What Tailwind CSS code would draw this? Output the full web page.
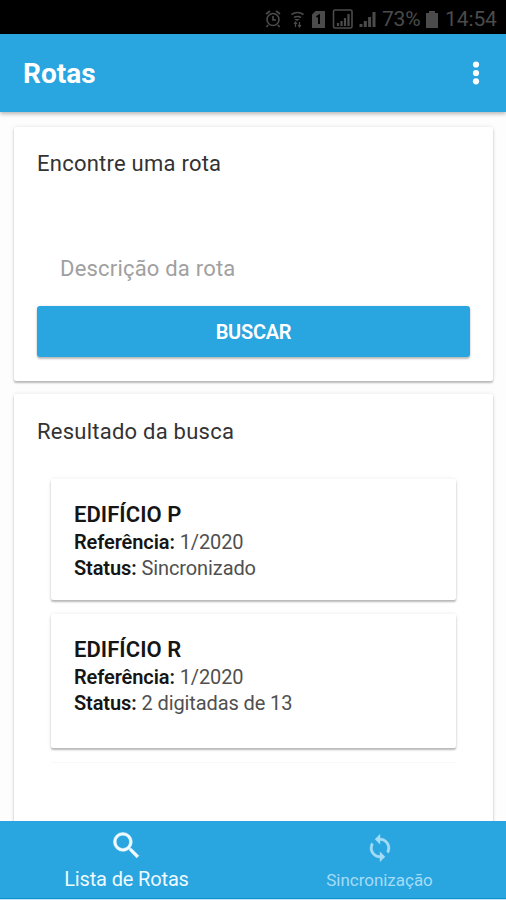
<!DOCTYPE html>
<html lang="pt-BR">
<head>
<meta charset="utf-8">
<title>Rotas</title>
<script src="https://cdn.jsdelivr.net/npm/@tailwindcss/browser@4"></script>
</head>
<body class="w-[506px] h-[900px] overflow-hidden bg-[#bfe6f8] font-[Roboto,sans-serif]">
<div class="flex h-[899px] w-[506px] flex-col overflow-hidden bg-[#fdfdfd]">
  <div class="flex h-[34px] shrink-0 items-center bg-black pt-[3px] pl-[265px] text-[#4b4b4b]">
    <svg class="h-[20px] w-[117px] shrink-0" viewBox="265 8 117 20" fill="none" stroke="currentColor" stroke-width="1.6">
      <circle cx="273" cy="18.5" r="6"/><path d="M273 15v4h3M266 13l4-3M276 10l4 3M268 24l-1.500 2M278 24l1.500 2"/>
      <path d="M291.500 13.500q6-4 12 0M294 16.500q3.500-2 7 0" /><path d="M297 20l-3-2h6z" fill="currentColor" stroke="none"/><path d="M295.500 26v-5M294 23l1.500-2 1.500 2M299.500 21v5M298 24l1.500 2 1.500-2" stroke-width="1.200"/>
      <path d="M315.500 10H325v17h-13V13.500z" fill="currentColor" stroke="none"/><path d="M316.500 16l2.500-1.500V23" stroke="#000" stroke-width="2"/>
      <rect x="333.500" y="9" width="18.500" height="18" rx="1.500"/><path d="M338 25v-3M341.500 25v-5M345 25v-8M348.500 25V13" stroke-width="2.200"/>
      <path d="M361 26v-3M365.300 26v-6M369.600 26v-10M374 26V11" stroke-width="3"/>
    </svg>
    <span class="w-[42px] text-[21px] leading-5 tracking-[-0.2px]">73%</span>
    <svg class="ml-[2px] h-[18px] w-[12px] shrink-0" viewBox="0 0 12 18" fill="currentColor"><path d="M3 1h6v2h3v15H0V3h3z"/></svg>
    <span class="ml-[7px] text-[21px] leading-5 tracking-[-0.1px]">14:54</span>
  </div>

  <header class="z-10 flex h-[78px] shrink-0 items-center justify-between bg-[#29a5df] pr-[25px] pl-[23px] text-white shadow-[0_2px_4px_rgba(0,0,0,0.28)]">
    <h1 class="pt-px text-[28px] leading-8 font-bold">Rotas</h1>
    <svg class="h-[24px] w-[10px]" viewBox="0 0 10 24" fill="currentColor"><circle cx="5" cy="3.500" r="3.100"/><circle cx="5" cy="12" r="3.100"/><circle cx="5" cy="20.300" r="3.100"/></svg>
  </header>

  <main class="flex min-h-0 flex-1 flex-col gap-[13px] overflow-hidden pr-[13px] pl-[14px] pt-[15px]">
    <section class="flex h-[254px] shrink-0 flex-col rounded-[2px] bg-white px-[23px] pt-[24px] shadow-[0_2px_2px_rgba(0,0,0,0.24),0_0_4px_rgba(0,0,0,0.10)]">
      <h2 class="text-[22px] leading-[26px] tracking-[0.24px] text-[#333]">Encontre uma rota</h2>
      <div class="mt-[79px] pl-[23px] text-[22px] leading-[26px] tracking-[0.2px] text-[#a0a0a0]">Descrição da rota</div>
      <button class="mt-[24px] h-[51px] rounded-[3px] bg-[#29a5df] text-[20px] tracking-[-0.25px] font-semibold text-white shadow-[0_2px_2px_rgba(0,0,0,0.24),0_0_3px_rgba(0,0,0,0.10)]">BUSCAR</button>
    </section>

    <section class="flex h-[460px] shrink-0 flex-col gap-[14px] rounded-[2px] bg-white px-[23px] pt-[25px] shadow-[0_2px_2px_rgba(0,0,0,0.24),0_0_4px_rgba(0,0,0,0.10)]">
      <h2 class="mb-[20px] text-[22px] leading-[26px] tracking-[0.24px] text-[#333]">Resultado da busca</h2>
      <article class="mx-[14px] h-[121px] shrink-0 rounded-[2px] bg-white px-[23px] pt-[22px] text-[20px] leading-[26px] tracking-[-0.1px] text-[#505050] shadow-[0_2px_2px_rgba(0,0,0,0.26),0_0_4px_rgba(0,0,0,0.08)]">
        <h3 class="text-[22px] leading-[28px] font-semibold tracking-[0.05px] text-[#151515]">EDIFÍCIO P</h3>
        <p><b class="font-semibold text-[#151515]">Referência:</b> 1/2020</p>
        <p><b class="font-semibold text-[#151515]">Status:</b> Sincronizado</p>
      </article>
      <article class="mx-[14px] h-[134px] shrink-0 rounded-[2px] bg-white px-[23px] pt-[22px] text-[20px] leading-[26px] tracking-[-0.1px] text-[#505050] shadow-[0_2px_2px_rgba(0,0,0,0.26),0_0_4px_rgba(0,0,0,0.08)]">
        <h3 class="text-[22px] leading-[28px] font-semibold tracking-[0.05px] text-[#151515]">EDIFÍCIO R</h3>
        <p><b class="font-semibold text-[#151515]">Referência:</b> 1/2020</p>
        <p><b class="font-semibold text-[#151515]">Status:</b> 2 digitadas de 13</p>
      </article>
      <div class="mx-[14px] h-px shrink-0 bg-[#f9f9f9]"></div>
    </section>
  </main>

  <nav class="z-10 grid h-[78px] shrink-0 grid-cols-2 border-b border-[#1490c8] bg-[#29a5df]">
    <div class="flex flex-col items-center pt-[7px] text-[#eefaff]">
      <svg class="h-[35px] w-[35px]" viewBox="0 0 24 24" fill="currentColor" stroke="currentColor" stroke-width="0.3"><path d="M15.500 14h-.79l-.28-.27A6.471 6.471 0 0 0 16 9.500 6.500 6.500 0 1 0 9.500 16c1.610 0 3.090-.59 4.230-1.570l.27.28v.79l5 4.990L20.490 19l-4.990-5zm-6 0C7.010 14 5 11.990 5 9.500S7.010 5 9.500 5 14 7.010 14 9.500 11.990 14 9.500 14z"/></svg>
      <span class="mt-[4px] text-[20px] leading-6 tracking-[-0.15px]">Lista de Rotas</span>
    </div>
    <div class="flex flex-col items-center pt-[12px] text-[#a5dcf7]">
      <svg class="h-[30px] w-[30px]" viewBox="0 0 24 24" fill="currentColor" stroke="currentColor" stroke-width="0.3"><path d="M12 4V1L8 5l4 4V6c3.310 0 6 2.690 6 6 0 1.010-.25 1.970-.7 2.800l1.460 1.460A7.930 7.930 0 0 0 20 12c0-4.420-3.580-8-8-8zm0 14c-3.310 0-6-2.690-6-6 0-1.010.25-1.970.7-2.800L5.240 7.740A7.930 7.930 0 0 0 4 12c0 4.420 3.580 8 8 8v3l4-4-4-4v3z"/></svg>
      <span class="mt-[5px] text-[17px] leading-6 tracking-[-0.02px]">Sincronização</span>
    </div>
  </nav>
</div>
</body>
</html>
